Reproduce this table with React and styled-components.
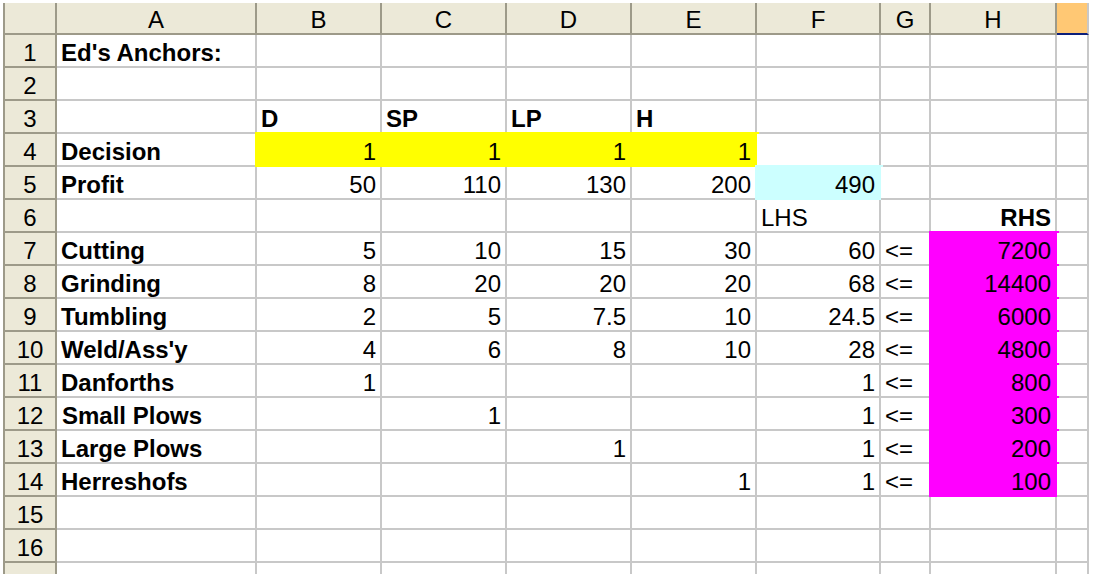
import React from 'react';
import styled, { createGlobalStyle } from 'styled-components';

const GlobalStyle = createGlobalStyle`
  html, body {
    margin: 0;
    background: #ffffff;
    overflow: hidden;
  }
`;

const GRID = '#c8c8c8';
const HEAD_BG = '#ece9d8';
const HEAD_LINE = '#9d9a89';

const fills = {
  yellow: '#ffff00',
  cyan: '#ccffff',
  magenta: '#ff00ff',
};

const Sheet = styled.div`
  display: grid;
  grid-template-columns: 54px 200px 125px 125px 125px 125px 124px 50px 126px 32px;
  grid-template-rows: 32px;
  grid-auto-rows: 33px;
  width: max-content;
  height: 571px;
  overflow: hidden;
  padding: 3px 0 0 3px;
  font-family: 'Liberation Sans', Arial, sans-serif;
  font-size: 24px;
  color: #000;
`;

const Corner = styled.div`
  box-sizing: border-box;
  background: ${HEAD_BG};
  border-left: 2px solid ${HEAD_LINE};
  border-right: 2px solid ${HEAD_LINE};
  border-bottom: 2px solid ${HEAD_LINE};
`;

const ColHeader = styled.div`
  box-sizing: border-box;
  background: ${(p) => (p.$active ? '#ffc874' : HEAD_BG)};
  border-right: 2px solid ${(p) => (p.$active ? GRID : HEAD_LINE)};
  border-bottom: 2px solid ${(p) => (p.$active ? '#0c1f7a' : HEAD_LINE)};
  padding-top: 3px;
  line-height: 27px;
  text-align: center;
`;

const RowHeader = styled.div`
  box-sizing: border-box;
  background: ${HEAD_BG};
  border-left: 2px solid ${HEAD_LINE};
  border-right: 2px solid ${HEAD_LINE};
  border-bottom: 2px solid ${HEAD_LINE};
  padding-top: 5px;
  line-height: 26px;
  text-align: center;
`;

const Cell = styled.div`
  box-sizing: border-box;
  background: ${(p) => (p.$fill ? fills[p.$fill] : '#fff')};
  border-right: 2px solid ${(p) => (p.$fill ? fills[p.$fill] : GRID)};
  border-bottom: 2px solid ${(p) => (p.$fill ? fills[p.$fill] : GRID)};
  box-shadow: ${(p) => (p.$fill ? `0 0 0 2px ${fills[p.$fill]}` : 'none')};
  padding: 5px 4px 0 ${(p) => (p.$indent ? 5 : 4)}px;
  line-height: 26px;
  text-align: ${(p) => p.$align || 'left'};
  font-weight: ${(p) => (p.$bold ? 700 : 400)};
  white-space: nowrap;
`;

const columns = ['A', 'B', 'C', 'D', 'E', 'F', 'G', 'H', ''];

// helpers for the cell kinds: bold label, yellow input, number, relation, magenta limit
const b = (v) => ({ v, bold: true });
const y = (v) => ({ v, fill: 'yellow', align: 'right' });
const n = (v) => ({ v, align: 'right' });
const le = { v: '<=' };
const m = (v) => ({ v, fill: 'magenta', align: 'right' });

const rows = [
  [b("Ed's Anchors:")],
  [],
  [null, b('D'), b('SP'), b('LP'), b('H')],
  [b('Decision'), y(1), y(1), y(1), y(1)],
  [b('Profit'), n(50), n(110), n(130), n(200), { v: 490, fill: 'cyan', align: 'right' }],
  [null, null, null, null, null, { v: 'LHS' }, null, { v: 'RHS', bold: true, align: 'right' }],
  [b('Cutting'), n(5), n(10), n(15), n(30), n(60), le, m(7200)],
  [b('Grinding'), n(8), n(20), n(20), n(20), n(68), le, m(14400)],
  [b('Tumbling'), n(2), n(5), n(7.5), n(10), n(24.5), le, m(6000)],
  [b("Weld/Ass'y"), n(4), n(6), n(8), n(10), n(28), le, m(4800)],
  [b('Danforths'), n(1), null, null, null, n(1), le, m(800)],
  [{ v: 'Small Plows', bold: true, indent: true }, null, n(1), null, null, n(1), le, m(300)],
  [b('Large Plows'), null, null, n(1), null, n(1), le, m(200)],
  [b('Herreshofs'), null, null, null, n(1), n(1), le, m(100)],
  [],
  [],
  [],
];

export default function App() {
  return (
    <>
      <GlobalStyle />
      <Sheet>
        <Corner />
        {columns.map((c, i) => (
          <ColHeader key={i} $active={c === ''}>
            {c}
          </ColHeader>
        ))}
        {rows.map((row, r) => (
          <React.Fragment key={r}>
            {/* last row is only a sliver at the window's bottom, its number is out of view */}
            <RowHeader>{r < 16 ? r + 1 : ''}</RowHeader>
            {columns.map((_, c) => {
              const cell = row[c];
              return (
                <Cell
                  key={c}
                  $fill={cell && cell.fill}
                  $align={cell && cell.align}
                  $bold={cell && cell.bold}
                  $indent={cell && cell.indent}
                >
                  {cell ? cell.v : ''}
                </Cell>
              );
            })}
          </React.Fragment>
        ))}
      </Sheet>
    </>
  );
}
